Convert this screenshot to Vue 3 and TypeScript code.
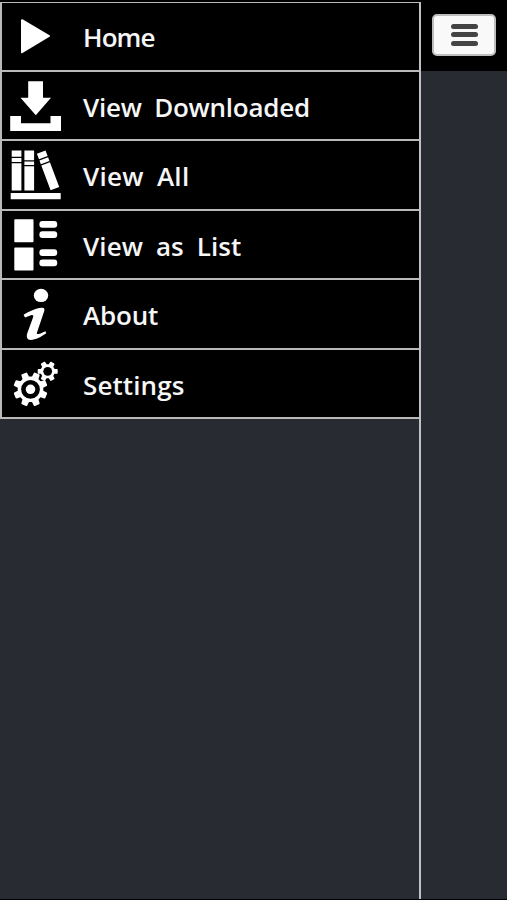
<script setup lang="ts">
interface MenuItem {
  id: string
  label: string
  tracking: number
}

const items: MenuItem[] = [
  { id: 'home', label: 'Home', tracking: -0.9 },
  { id: 'download', label: 'View Downloaded', tracking: -0.25 },
  { id: 'library', label: 'View All', tracking: 0.3 },
  { id: 'list', label: 'View as List', tracking: 0.1 },
  { id: 'about', label: 'About', tracking: -0.2 },
  { id: 'settings', label: 'Settings', tracking: 0.1 },
]

// Outline of a cog centred on (cx, cy), with trapezoidal teeth.
function cog(cx: number, cy: number, outer: number, inner: number, teeth: number, turn: number): string {
  const step = (Math.PI * 2) / teeth
  const points: string[] = []
  for (let i = 0; i < teeth; i++) {
    const a = i * step + turn
    const corners: [number, number][] = [[-0.27, inner], [-0.17, outer], [0.17, outer], [0.27, inner]]
    for (const [offset, r] of corners) {
      const t = a + offset * step
      points.push(`${(cx + r * Math.cos(t)).toFixed(2)},${(cy + r * Math.sin(t)).toFixed(2)}`)
    }
  }
  return points.join(' ')
}

const bigCog = cog(30.5, 39.3, 16.2, 12, 8, Math.PI / 8)
const smallCog = cog(47.7, 21.3, 9.4, 6.5, 6, 0)
</script>

<template>
  <div class="screen">
    <nav class="drawer">
      <ul class="menu">
        <li v-for="item in items" :key="item.id" class="row">
          <svg class="icon" width="68" height="67" viewBox="0 0 68 67" fill="#fff">
            <path v-if="item.id === 'home'" d="M22 17.2 L49 33 L22 49.2 Z" stroke="#fff" stroke-width="2" stroke-linejoin="round" />
            <g v-else-if="item.id === 'download'">
              <path d="M28.2 9.2H43V25.7H51L35.8 43.2L20.5 25.7H28.2Z" />
              <path d="M10.2 43.9H21V51.2H50.5V43.9H61V59H10.2Z" />
            </g>
            <g v-else-if="item.id === 'library'">
              <path d="M11.7 9.5h9.7v6.3h-9.7zM11.7 17h9.7v4h-9.7zM11.7 22.3h9.7v27.2h-9.7z" />
              <path d="M24.4 9.5h9.7v9.7h-9.7zM24.4 20.4h9.7v3.5h-9.7zM24.4 25.2h9.7v24.3h-9.7z" />
              <path transform="translate(36.9 12.7) rotate(-20.5)" d="M0 0h9.2v6h-9.2zM0 7.3h9.2v4h-9.2zM0 12.6h9.2v26.5h-9.2z" />
              <path d="M10.7 51.9h50v6.4h-50z" />
            </g>
            <g v-else-if="item.id === 'list'">
              <rect x="14.3" y="8.3" width="19.2" height="23" rx=".8" />
              <rect x="14.3" y="36.6" width="19.2" height="23" rx=".8" />
              <rect x="39.4" y="10.1" width="17.8" height="6.7" rx="3" />
              <rect x="39.4" y="20.3" width="17.8" height="6.7" rx="3" />
              <rect x="39.4" y="38.3" width="17.8" height="6.7" rx="3" />
              <rect x="39.4" y="48.5" width="17.8" height="6.7" rx="3" />
            </g>
            <g v-else-if="item.id === 'about'">
              <ellipse cx="41" cy="15.4" rx="7.2" ry="6.7" />
              <path d="M23.6 34.8C29 31.5 36 28.2 41.5 27.8C44.5 27.5 44.9 29 44.1 31.5L37 52.5C36.4 54.8 38 54.9 45.4 51.2L46.3 53.3C41 57 35.7 59.9 30.8 59.9C27 59.9 26.2 57 27.2 53.5L33 37.5C33.8 35.2 33 34.5 31 35.2L25 37.4Z" />
            </g>
            <g v-else>
              <polygon :points="bigCog" stroke="#fff" stroke-width="2" stroke-linejoin="round" />
              <circle cx="30.5" cy="39.3" r="7.1" fill="none" stroke="#000" stroke-width="4.6" />
              <polygon :points="smallCog" stroke="#fff" stroke-width="1.5" stroke-linejoin="round" />
              <circle cx="47.7" cy="21.3" r="4.4" fill="#000" />
            </g>
          </svg>
          <span class="label" :style="{ letterSpacing: item.tracking + 'px' }">{{ item.label }}</span>
        </li>
      </ul>
    </nav>
    <main class="content">
      <header class="topbar">
        <button class="toggle" type="button" aria-label="Menu">
          <span class="bar"></span>
          <span class="bar"></span>
          <span class="bar"></span>
        </button>
      </header>
    </main>
  </div>
</template>

<style>
body {
  margin: 0;
  background: #282c32;
}
</style>

<style scoped>
.screen {
  box-sizing: border-box;
  display: flex;
  width: 507px;
  height: 900px;
  overflow: hidden;
  background: #282c32;
  border-top: 2px solid #000;
  border-bottom: 1px solid #000;
}
.drawer {
  box-sizing: border-box;
  width: 420.5px;
  border-right: 2px solid #bfc2c4;
}
.menu {
  margin: 0;
  padding: 0;
  list-style: none;
  border-top: 1px solid #b9b9b9;
}
.row {
  box-sizing: border-box;
  display: flex;
  align-items: flex-start;
  height: 69.5px;
  background: #000;
  border-left: 2px solid #b9b9b9;
  border-bottom: 2px solid #b9b9b9;
}
.row:first-child {
  height: 68.6px;
}
.icon {
  flex: none;
  margin-left: -2px;
}
.label {
  margin-left: 15px;
  padding-top: 1px;
  color: #f6f6f6;
  font: 600 26px/68px "Open Sans", sans-serif;
  word-spacing: 6px;
  white-space: pre;
}
.row:first-child .label {
  padding-top: 0;
}
.content {
  flex: 1;
}
.topbar {
  box-sizing: border-box;
  height: 69px;
  padding: 12px 0 0 11.5px;
  background: #000;
}
.toggle {
  box-sizing: border-box;
  display: flex;
  flex-direction: column;
  align-items: center;
  gap: 3.5px;
  width: 64px;
  height: 42px;
  margin: 0;
  padding: 7.5px 0 0;
  border: 2px solid #bdbdbd;
  border-radius: 5px;
  background: #f9f9f9;
}
.bar {
  width: 27px;
  height: 5px;
  border-radius: 2.5px;
  background: #444;
}
</style>
